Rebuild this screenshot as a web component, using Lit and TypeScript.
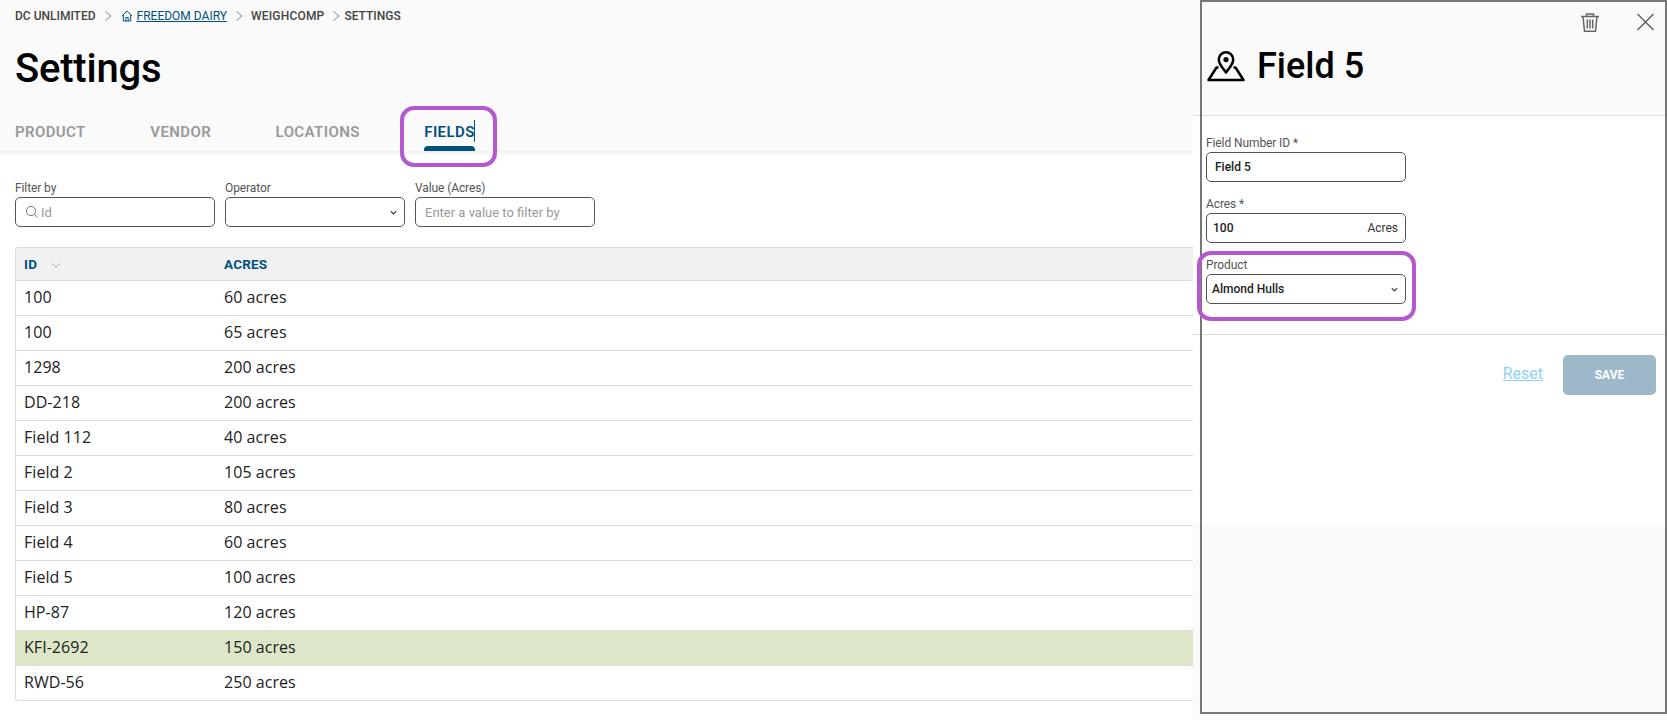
import { LitElement, html, css, svg } from "lit";
import { customElement } from "lit/decorators.js";

const rows: [string, string][] = [
  ["100", "60 acres"], ["100", "65 acres"], ["1298", "200 acres"], ["DD-218", "200 acres"],
  ["Field 112", "40 acres"], ["Field 2", "105 acres"], ["Field 3", "80 acres"], ["Field 4", "60 acres"],
  ["Field 5", "100 acres"], ["HP-87", "120 acres"], ["KFI-2692", "150 acres"], ["RWD-56", "250 acres"],
];
const chevron = svg`<path d="M.8 1.2 L3.5 4 L6.2 1.2" fill="none" stroke="#333" stroke-width="1.1"/>`;
const sep = html`<svg width="9" height="12" viewBox="0 0 9 12"><path d="M1.5 1.5 L7 6 L1.5 10.5" fill="none" stroke="#888"/></svg>`;

@customElement("app-root")
export class AppRoot extends LitElement {
  static styles = css`
    :host { display: block; width: 1667px; height: 720px; overflow: hidden; position: relative; background: #fff; font-family: "Roboto", "Noto Sans", sans-serif; }
    * { box-sizing: border-box; }
    .layout { display: grid; grid-template-columns: 1193px 474px; height: 720px; }
    .main { min-width: 0; }
    .head { background: #fafafa; height: 151px; padding: 9px 0 0 15px; box-shadow: 0 2px 4px rgba(0,0,0,.08); position: relative; }
    .crumbs { display: flex; align-items: center; height: 14px; font-size: 12px; font-weight: 500; color: #444; gap: 8px; text-transform: uppercase; }
    .crumbs a { color: #00507d; text-decoration: underline; font-weight: 400; }
    .crumbs .home { display: flex; align-items: center; gap: 4px; }
    .crumbs .wc { margin-left: -1px; letter-spacing: .2px; }
    .crumbs .last { margin-left: -5px; }
    h1 { margin: 23px 0 0; font-size: 40px; line-height: 46px; font-weight: 500; color: #000; letter-spacing: -.2px; }
    .tabs { display: flex; gap: 64.5px; margin-top: 27px; }
    .tab { font-size: 15px; font-weight: 600; color: #999; height: 32px; line-height: 26px; text-transform: uppercase; position: relative; letter-spacing: .4px; }
    .tab.on { color: #00507d; }
    .tab.on::after { content: ""; position: absolute; left: 0; right: 0; bottom: 0; height: 5px; background: #00507d; border-radius: 4px 4px 0 0; }
    .caret { position: absolute; right: 0; top: 1px; width: 1px; height: 22px; background: #00507d; }
    .filters { display: flex; gap: 10px; padding: 30px 0 0 15px; }
    .fld { display: flex; flex-direction: column; }
    .lbl { font-size: 12px; line-height: 14px; color: #555; margin-bottom: 2px; letter-spacing: -.1px; }
    .box { height: 30px; border: 1px solid #555; border-radius: 5px; background: #fff; display: flex; align-items: center; padding: 0 7px 0 9px; font-size: 13px; color: #999; justify-content: space-between; }
    .w1 { width: 200px; } .w2 { width: 180px; }
    .srch { justify-content: flex-start; gap: 2px; }
    table { border-collapse: separate; border-spacing: 0; width: 1178px; margin: 20px 0 0 15px; border: 1px solid #ddd; border-right: 0; border-radius: 3px 0 0 3px; table-layout: fixed; font-family: "Open Sans", sans-serif; }
    th { height: 33px; background: #f1f1f1; color: #00507d; text-align: left; font-size: 13.5px; font-weight: 700; padding: 0 8px; border-bottom: 1px solid #ddd; font-family: "Roboto", sans-serif; letter-spacing: .2px; }
    th svg { margin-left: 14px; }
    td { height: 35px; padding: 0 8px 2px; font-size: 16px; color: #222; border-bottom: 1px solid #ddd; letter-spacing: .05px; }
    tr:last-child td { border-bottom: 0; height: 34px; }
    tr.hl td { background: #dde7c7; }
    .col1 { width: 200px; }
    .panel { position: relative; display: flex; flex-direction: column; background: #fafafa; height: 720px; }
    .phead { background: #fafafa; height: 116px; border-bottom: 1px solid #ddd; padding: 13px 0 0 0; position: relative; }
    .ptools { display: flex; justify-content: flex-end; gap: 38px; padding-right: 13px; align-items: flex-start; height: 20px; }
    .ptitle { display: flex; align-items: center; gap: 12px; padding-left: 14px; margin-top: 11px; font-size: 36px; font-weight: 500; color: #000; line-height: 44px; }
    .pbody { background: #fff; height: 409px; display: flex; flex-direction: column; }
    .form { padding: 20px 0 0 13px; height: 218px; display: flex; flex-direction: column; gap: 15px; }
    .form .box { width: 200px; color: #222; font-size: 12px; font-weight: 500; padding-left: 8px; }
    .form .lbl { margin-bottom: 2px; }
    .form .tiny { padding-left: 6px; }
    .form .sel { padding-left: 5px; }
    .unit { font-weight: 400; font-size: 12px; color: #333; }
    .foot { border-top: 1px solid #ddd; display: flex; justify-content: flex-end; align-items: center; gap: 20px; padding: 20px 11px 0 0; }
    .reset { color: #8fd0f2; text-decoration: underline; font-size: 16px; line-height: 18px; margin-bottom: 2px; }
    .save { width: 93px; height: 40px; border-radius: 5px; background: #9cb8c9; color: #fff; font-size: 12px; font-weight: 700; display: flex; align-items: center; justify-content: center; }
    .frame { position: absolute; left: 1200px; top: 0; width: 467px; height: 714px; border: 2px solid #777; pointer-events: none; }
    .mark { position: absolute; border: 4px solid #b558d0; border-radius: 14px; pointer-events: none; }
    .m1 { left: 400px; top: 106px; width: 97px; height: 61px; }
    .m2 { left: 1197px; top: 251px; width: 219px; height: 70px; }
  `;

  render() {
    return html`
      <div class="layout">
        <div class="main">
          <div class="head">
            <div class="crumbs">
              <span>DC Unlimited</span>
              ${sep}
              <span class="home">
                <svg width="12" height="12" viewBox="0 0 12 12"><path d="M.8 6 L6 1.2 L11.2 6 M2.3 5 V11 H9.7 V5 M4.8 11 V7.5 H7.2 V11" fill="none" stroke="#00507d"/></svg>
                <a>Freedom Dairy</a>
              </span>
              ${sep}
              <span class="wc">WeighComp</span>
              ${sep}
              <span class="last">Settings</span>
            </div>
            <h1>Settings</h1>
            <div class="tabs">
              <div class="tab">Product</div>
              <div class="tab">Vendor</div>
              <div class="tab">Locations</div>
              <div class="tab on">Fields<span class="caret"></span></div>
            </div>
          </div>
          <div class="filters">
            <div class="fld w1"><span class="lbl">Filter by</span>
              <div class="box srch">
                <svg width="14" height="14" viewBox="0 0 14 14"><circle cx="6" cy="6" r="4.6" fill="none" stroke="#777"/><path d="M9.4 9.4 L12.5 12.5" stroke="#777"/></svg>
                <span>Id</span>
              </div>
            </div>
            <div class="fld w2"><span class="lbl">Operator</span>
              <div class="box"><span></span><svg width="7" height="5" viewBox="0 0 7 5">${chevron}</svg></div>
            </div>
            <div class="fld w2"><span class="lbl">Value (Acres)</span>
              <div class="box"><span>Enter a value to filter by</span></div>
            </div>
          </div>
          <table>
            <thead><tr><th class="col1">ID<svg width="10" height="7" viewBox="0 0 10 7"><path d="M1 1.5 L5 5 L9 1.5" fill="none" stroke="#9fb8c6"/></svg></th><th>ACRES</th></tr></thead>
            <tbody>
              ${rows.map((r) => html`<tr class=${r[0] === "KFI-2692" ? "hl" : ""}><td>${r[0]}</td><td>${r[1]}</td></tr>`)}
            </tbody>
          </table>
        </div>
        <div class="panel">
          <div class="phead">
            <div class="ptools">
              <svg width="18" height="19" viewBox="0 0 18 19" fill="none" stroke="#666" stroke-width="1.5"><path d="M0 3.5 H18 M5.5 3.5 V1 H12.5 V3.5 M2 3.5 L3.5 18.2 H14.5 L16 3.5 M6.3 6.5 V15.5 M9 6.5 V15.5 M11.7 6.5 V15.5"/></svg>
              <svg width="17" height="18" viewBox="0 0 17 18" fill="none" stroke="#555" stroke-width="1.2"><path d="M.5 1 L16.5 17 M16.5 1 L.5 17"/></svg>
            </div>
            <div class="ptitle">
              <svg width="38" height="31" viewBox="0 0 38 31" fill="none" stroke="#000" stroke-width="2.5" stroke-linejoin="round"><path d="M19 21.5 C15.5 16.5 11.8 13.5 11.8 8.5 A7.2 7.2 0 0 1 26.2 8.5 C26.2 13.5 22.5 16.5 19 21.5 Z"/><circle cx="19" cy="8.6" r="2.6" fill="#000" stroke="none"/><path d="M11.5 16.5 H9.5 L1.5 29 H36.5 L28.5 16.5 H26.5"/></svg>
              <span>Field 5</span>
            </div>
          </div>
          <div class="pbody">
            <div class="form">
              <div class="fld"><span class="lbl">Field Number ID *</span><div class="box"><span>Field 5</span></div></div>
              <div class="fld"><span class="lbl">Acres *</span><div class="box tiny"><span>100</span><span class="unit">Acres</span></div></div>
              <div class="fld"><span class="lbl">Product</span><div class="box sel"><span>Almond Hulls</span><svg width="7" height="5" viewBox="0 0 7 5">${chevron}</svg></div></div>
            </div>
            <div class="foot"><span class="reset">Reset</span><div class="save">SAVE</div></div>
          </div>
        </div>
      </div>
      <div class="frame"></div>
      <div class="mark m1"></div>
      <div class="mark m2"></div>
    `;
  }
}
